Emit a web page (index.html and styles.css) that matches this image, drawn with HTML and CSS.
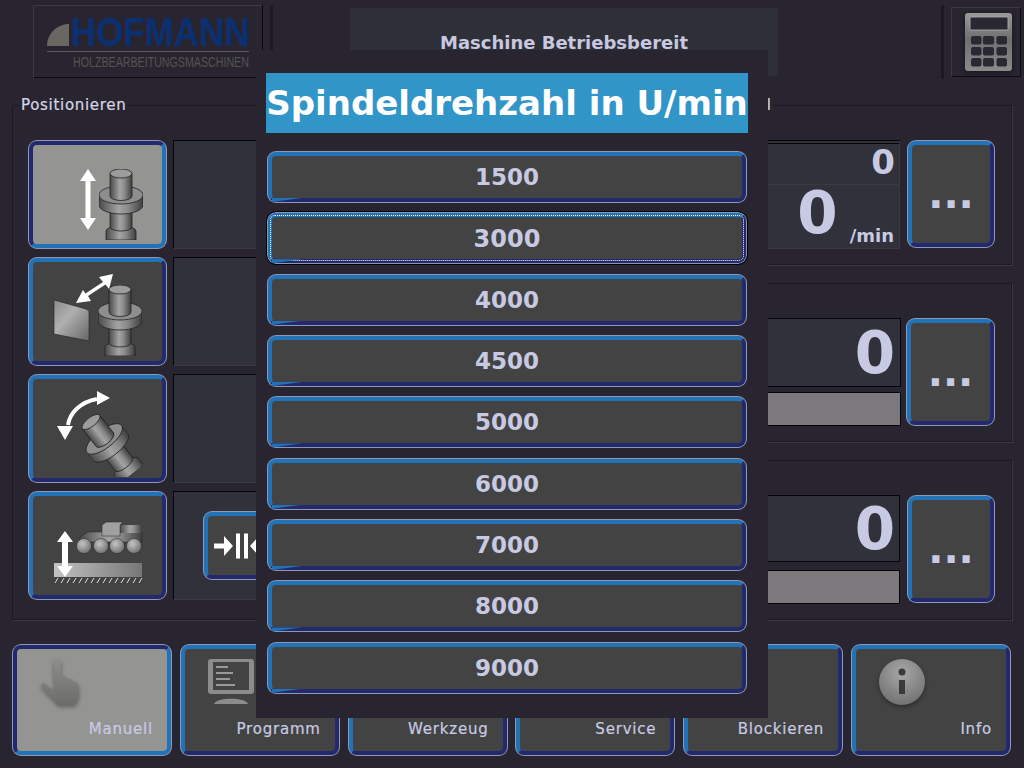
FILE: index.html
```html
<!DOCTYPE html>
<html lang="de">
<head>
<meta charset="utf-8">
<title>Hofmann</title>
<link rel="stylesheet" href="styles.css">
</head>
<body>
<svg class="defs" aria-hidden="true">
  <defs>
    <linearGradient id="metal" x1="0" x2="1" y1="0" y2="0">
      <stop offset="0" stop-color="#4a4a4a"/><stop offset=".45" stop-color="#a4a4a4"/><stop offset=".65" stop-color="#8c8c8c"/><stop offset="1" stop-color="#3e3e3e"/>
    </linearGradient>
    <linearGradient id="flat" x1="0" x2="1" y1="0" y2="1">
      <stop offset="0" stop-color="#8a8a8a"/><stop offset=".4" stop-color="#b0b0b0"/><stop offset="1" stop-color="#666"/>
    </linearGradient>
    <linearGradient id="ground" x1="0" x2="1" y1="0" y2="0">
      <stop offset="0" stop-color="#c2c2c2"/><stop offset="1" stop-color="#777"/>
    </linearGradient>
    <radialGradient id="ball" cx=".4" cy=".35" r=".7">
      <stop offset="0" stop-color="#c4c4c4"/><stop offset="1" stop-color="#6c6c6c"/>
    </radialGradient>
    <radialGradient id="info" cx=".5" cy=".3" r=".75">
      <stop offset="0" stop-color="#a8a8a8"/><stop offset="1" stop-color="#6e6e6e"/>
    </radialGradient>
    <linearGradient id="calc" x1="0" x2="0" y1="0" y2="1">
      <stop offset="0" stop-color="#9a9a9a"/><stop offset=".45" stop-color="#6f6f6f"/><stop offset="1" stop-color="#8a8a8a"/>
    </linearGradient>
    <linearGradient id="hand" x1="0" x2="0" y1="0" y2="1">
      <stop offset="0" stop-color="#8e8e8c"/><stop offset="1" stop-color="#6c6c6a"/>
    </linearGradient>
    <symbol id="spindle" viewBox="0 0 44 71" width="44" height="71" overflow="hidden">
      <path d="M7 62a15 5 0 0 1 30 0V71H7Z" fill="url(#metal)" stroke="#222" stroke-width=".8"/>
      <path d="M11 42H33V58a11 4 0 0 1-22 0Z" fill="url(#metal)" stroke="#222" stroke-width=".8"/>
      <path d="M0 26V36C0 41 10 45 22 45S44 41 44 36V26Z" fill="url(#metal)" stroke="#222" stroke-width=".8"/>
      <ellipse cx="22" cy="26" rx="22" ry="9" fill="#8e8e8e" stroke="#222" stroke-width=".8"/>
      <path d="M11 4.500V27a11 4.500 0 0 0 22 0V4.500Z" fill="url(#metal)" stroke="#222" stroke-width=".8"/>
      <ellipse cx="22" cy="4.500" rx="11" ry="4.500" fill="#9c9c9c" stroke="#222" stroke-width=".8"/>
    </symbol>
  </defs>
</svg>

<header class="header">
  <div class="logo">
    <svg class="logo-art" viewBox="0 0 228 71" role="img" aria-label="Hofmann">
      <path d="M13 40H35V18C23 18 13 28 13 40Z" fill="#6a6662"/>
      <text class="logo-name" transform="translate(37 40) scale(.875 1)">HOFMANN</text>
      <rect x="13" y="45" width="202" height="1" fill="#5c5a56"/>
      <text class="logo-sub" transform="translate(39 61) scale(.762 1)">HOLZBEARBEITUNGSMASCHINEN</text>
    </svg>
  </div>
  <div class="sep-black"></div>
  <div class="sep-dark"></div>
  <div class="status">Maschine Betriebsbereit</div>
  <div class="sep-tall"></div>
  <div class="calc">
    <svg class="calc-art" viewBox="0 0 47 58" aria-hidden="true">
      <rect width="47" height="58" rx="3" fill="url(#calc)"/>
      <rect x="5" y="4" width="38" height="13" rx="1.500" fill="#2a2833" stroke="#b4b4b4" stroke-width=".8"/>
      <g fill="#2a2833">
        <rect x="6" y="23" width="10.500" height="8.500" rx="2"/><rect x="18" y="23" width="11" height="8.500" rx="2"/><rect x="31.500" y="23" width="10.500" height="8.500" rx="2"/>
        <rect x="6" y="34" width="10.500" height="8.500" rx="2"/><rect x="18" y="34" width="11" height="8.500" rx="2"/><rect x="31.500" y="34" width="10.500" height="8.500" rx="2"/>
        <rect x="6" y="45" width="10.500" height="8.500" rx="2"/><rect x="18" y="45" width="11" height="8.500" rx="2"/><rect x="31.500" y="45" width="10.500" height="8.500" rx="2"/>
      </g>
    </svg>
  </div>
</header>

<main class="main">
  <section class="group group-left">
    <span class="legend">Positionieren</span>
    <div class="pos-grid">
      <button class="btn btn-pressed pos-btn">
        <svg class="pos-icon" viewBox="0 0 90 90" aria-hidden="true">
          <use href="#spindle" x="46" y="16"/>
          <path d="M35 16l8 12h-5.500v37H43l-8 12-8-12h5.500V28H27Z" fill="#fff"/>
        </svg>
      </button>
      <div class="display"></div>

      <button class="btn pos-btn">
        <svg class="pos-icon" viewBox="0 0 90 90" aria-hidden="true">
          <use href="#spindle" x="45" y="15"/>
          <path d="M1 30 33 39 36 41V71L1 64Z" fill="url(#flat)" stroke="#222" stroke-width=".6"/>
          <path d="M60 4 56 19 52.500 14.500 35 26 38 31 23 33 30 20 32.500 23.500 50 12 46 7Z" fill="#fff"/>
        </svg>
      </button>
      <div class="display"></div>

      <button class="btn pos-btn">
        <svg class="pos-icon" viewBox="0 0 90 90" aria-hidden="true">
          <g transform="translate(38 35) rotate(-38) translate(-22 -4.500)"><use href="#spindle" x="0" y="0"/></g>
          <path d="M15 38C17 25 28 15 44 12" fill="none" stroke="#fff" stroke-width="4"/>
          <path d="M44 4 57 11 44 18Z M4 39 20 39 12 53Z" fill="#fff"/>
        </svg>
      </button>
      <div class="display"></div>

      <button class="btn pos-btn">
        <svg class="pos-icon" viewBox="0 0 90 90" aria-hidden="true">
          <rect x="1" y="59" width="88" height="14" fill="url(#ground)"/>
          <path d="M2 79 5 74M8 79 11 74M14 79 17 74M20 79 23 74M26 79 29 74M32 79 35 74M38 79 41 74M44 79 47 74M50 79 53 74M56 79 59 74M62 79 65 74M68 79 71 74M74 79 77 74M80 79 83 74M86 79 89 74" stroke="#ddd" stroke-width="1"/>
          <path d="M27 33 35 28H89V38H27Z" fill="url(#metal)" stroke="#222" stroke-width=".5"/>
          <path d="M67 21H89V29H67Z" fill="url(#metal)"/>
          <path d="M49 21 53 18H70L67 21V32H49Z" fill="#a0a0a0" stroke="#222" stroke-width=".5"/>
          <g fill="url(#ball)" stroke="#222" stroke-width=".5">
            <circle cx="31" cy="42" r="7.500"/><circle cx="48" cy="42" r="7.500"/><circle cx="64" cy="42" r="7.500"/><circle cx="81" cy="42" r="7.500"/>
          </g>
          <path d="M12 27 20 38H15V62H20L12 73 4 62H9V38H4Z" fill="#fff"/>
        </svg>
      </button>
      <div class="display display-action">
        <button class="btn small-btn">
          <svg class="small-icon" viewBox="0 -1 70 26" aria-hidden="true">
            <path d="M0 9.500H10V2L19 12 10 22V14.500H0Z M22 -.5H26V24.500H22Z M30 -.5H34V24.500H30Z M36 12 45 2V9.500H55V14.500H45V22Z" fill="#fff"/>
          </svg>
        </button>
      </div>
    </div>
  </section>

  <div class="right-col">
    <section class="group">
      <span class="legend">Spindel</span>
      <div class="value-row">
        <div class="readout">
          <div class="readout-top">0</div>
          <div class="readout-main"><span class="big-num">0</span><span class="unit">/min</span></div>
        </div>
        <button class="btn more-btn">...</button>
      </div>
    </section>
    <section class="group">
      <div class="value-row value-row-tight">
        <div class="value-stack">
          <div class="value-box">0</div>
          <div class="value-bar"></div>
        </div>
        <button class="btn more-btn more-btn-wide">...</button>
      </div>
    </section>
    <section class="group">
      <div class="value-row">
        <div class="value-stack value-stack-wide">
          <div class="value-box">0</div>
          <div class="value-bar"></div>
        </div>
        <button class="btn more-btn">...</button>
      </div>
    </section>
  </div>
</main>

<nav class="nav">
  <button class="btn btn-pressed nav-btn">
    <svg class="nav-icon nav-icon-shadow" viewBox="0 0 48 50" aria-hidden="true">
      <path d="M15 4C15 0 22 0 22 4V19C25 17 27 18 28 21 31 20 33 21 34 24 37 23 39 26 40 29V37C40 41 38 44 36 47H19C16 42 10 38 3 29 1 26 4 24 6 26L15 33Z" fill="url(#hand)"/>
    </svg>
    <span>Manuell</span>
  </button>
  <button class="btn nav-btn">
    <svg class="nav-icon" viewBox="0 0 48 50" aria-hidden="true">
      <rect x="1" y="1" width="46" height="35" rx="3" fill="#8c8c8c"/>
      <rect x="6" y="4" width="36" height="28" fill="#434343"/>
      <path d="M9 8H21V10H9ZM9 14H26V16H9ZM9 20H23V22H9ZM9 26H28V28H9Z" fill="#9a9a9a"/>
      <path d="M7 46C9 39 39 39 41 46Z" fill="#8c8c8c"/>
    </svg>
    <span>Programm</span>
  </button>
  <button class="btn nav-btn"><span class="nav-spacer"></span><span>Werkzeug</span></button>
  <button class="btn nav-btn"><span class="nav-spacer"></span><span>Service</span></button>
  <button class="btn nav-btn"><span class="nav-spacer"></span><span>Blockieren</span></button>
  <button class="btn nav-btn">
    <svg class="nav-icon nav-icon-shadow" viewBox="0 0 48 50" aria-hidden="true">
      <circle cx="24" cy="24" r="23" fill="url(#info)"/>
      <circle cx="24" cy="14" r="3.500" fill="#3a3a3a"/>
      <rect x="21" y="22" width="6" height="14" fill="#3a3a3a"/>
    </svg>
    <span>Info</span>
  </button>
</nav>

<div class="modal">
  <h1 class="modal-title">Spindeldrehzahl in U/min</h1>
  <div class="modal-list">
    <button class="btn list-btn">1500</button>
    <button class="btn list-btn list-btn-focus">3000</button>
    <button class="btn list-btn">4000</button>
    <button class="btn list-btn">4500</button>
    <button class="btn list-btn">5000</button>
    <button class="btn list-btn">6000</button>
    <button class="btn list-btn">7000</button>
    <button class="btn list-btn">8000</button>
    <button class="btn list-btn">9000</button>
  </div>
</div>
</body>
</html>
```

FILE: styles.css
```css
* { box-sizing: border-box; }

html, body {
  margin: 0;
  padding: 0;
}

body {
  position: relative;
  width: 1024px;
  height: 768px;
  overflow: hidden;
  background: #282531;
  color: #c8cae4;
  font-family: "DejaVu Sans", sans-serif;
}

.defs {
  position: absolute;
  width: 0;
  height: 0;
}

/* header */
.header {
  display: flex;
  align-items: flex-start;
  height: 105px;
  padding-left: 33px;
}

.logo {
  width: 230px;
  height: 73px;
  margin-top: 5px;
  border: 1px solid;
  border-color: #3a3944 #15141b #0c0b10 #3a3944;
}

.logo-art {
  display: block;
  width: 228px;
  height: 71px;
}

.logo-name {
  font-family: "Liberation Sans", sans-serif;
  font-size: 40px;
  font-weight: 700;
  fill: #0b3072;
}

.logo-sub {
  font-family: "Liberation Sans", sans-serif;
  font-size: 14px;
  fill: #55534f;
}

.sep-black {
  width: 1px;
  height: 45px;
  margin: 5px 0 0 -1px;
  background: #08070b;
}

.sep-dark {
  width: 3px;
  height: 45px;
  margin: 5px 0 0 7px;
  background: #1b1a22;
}

.status {
  display: flex;
  align-items: center;
  justify-content: center;
  width: 428px;
  height: 68px;
  margin: 8px 0 0 77px;
  padding-top: 1px;
  background: #2e2f37;
  color: #c8c8e0;
  font-size: 18px;
  font-weight: 700;
}

.sep-tall {
  width: 3px;
  height: 74px;
  margin: 5px 0 0 163px;
  background: #1b1a22;
}

.calc {
  display: flex;
  justify-content: center;
  width: 70px;
  height: 70px;
  margin: 7px 0 0 7px;
  padding: 5px 0 0 5px;
  border: 1px solid;
  border-color: #3a3944 #0c0b10 #0c0b10 #3a3944;
}

.calc-art {
  width: 47px;
  height: 58px;
  filter: drop-shadow(0 1px 2px rgba(0, 0, 0, 0.5));
}

/* main area */
.main {
  display: grid;
  grid-template-columns: 682px 310px;
  column-gap: 8px;
  height: 515px;
  padding-left: 12px;
}

.right-col {
  display: flex;
  flex-direction: column;
  gap: 18px;
}

.group {
  position: relative;
  flex: 1;
  padding: 34px 16px 0 15px;
  border: 1px solid #1b1a22;
  box-shadow: 1px 1px 0 #3a3944;
}

.legend {
  position: absolute;
  top: -9px;
  left: 7px;
  padding: 0 1px;
  background: #282531;
  color: #d6d6e4;
  font-size: 15px;
  letter-spacing: 0.7px;
  line-height: 17px;
  -webkit-text-stroke: 0.2px #d6d6e4;
}

.pos-grid {
  display: grid;
  grid-template-columns: 139px 1fr;
  grid-auto-rows: 109px;
  gap: 8px 6px;
}

.display {
  background: #30313a;
  border: 1px solid;
  border-color: #050507 #3a3a44 #3a3a44 #050507;
}

.display-action {
  display: flex;
  align-items: center;
  padding-left: 29px;
}

/* buttons */
.btn {
  position: relative;
  display: flex;
  margin: 1px;
  padding: 0;
  border: 4px solid;
  border-color: #2272b8 #22296e #22296e #2272b8;
  border-radius: 8px;
  background: #434343;
  box-shadow: 0 0 0 1px #9097b5;
  color: #c8cae4;
  font-family: "DejaVu Sans", sans-serif;
}

.btn-pressed {
  border-color: #22296e #2272b8 #2272b8 #22296e;
  background: #949593;
}

.pos-btn {
  align-items: center;
  justify-content: center;
}

.pos-icon {
  width: 90px;
  height: 90px;
  margin-top: 7px;
}

.small-btn {
  flex: 0 0 auto;
  align-items: center;
  justify-content: center;
  width: 90px;
  height: 67px;
}

.small-icon {
  width: 70px;
  height: 26px;
}

.more-btn {
  flex: 0 0 auto;
  align-items: center;
  justify-content: center;
  width: 86px;
  height: 106px;
  font-size: 40px;
  font-weight: 700;
  line-height: 40px;
}

.more-btn-wide {
  width: 87px;
}

/* readouts */
.value-row {
  display: flex;
  gap: 7px;
  justify-content: flex-end;
}

.value-row-tight {
  gap: 5px;
}

.readout {
  flex: 1;
  height: 109px;
  border: 1px solid;
  border-color: #050507 #3a3a44 #3a3a44 #30313a;
  border-top: 4px double #050507;
  background: #30313a;
}

.readout-top {
  height: 41px;
  padding-right: 4px;
  border-bottom: 1px solid #3a3a44;
  font-size: 34px;
  font-weight: 700;
  line-height: 36px;
  text-align: right;
}

.readout-main {
  display: flex;
  align-items: flex-start;
  justify-content: flex-end;
  height: 60px;
  padding-right: 5px;
  font-weight: 700;
}

.big-num {
  margin: -1px 12px 0 0;
  font-size: 58px;
  line-height: 58px;
}

.unit {
  margin-top: 42px;
  font-size: 18px;
  line-height: 18px;
}

.value-stack {
  display: flex;
  flex: 1;
  flex-direction: column;
  gap: 5px;
}

.value-stack-wide {
  gap: 8px;
}

.value-box {
  height: 69px;
  padding-right: 5px;
  border: 1px solid #050507;
  background: #30313a;
  font-size: 58px;
  font-weight: 700;
  line-height: 68px;
  text-align: right;
}

.value-stack-wide .value-box {
  height: 67px;
  padding-right: 4px;
  line-height: 66px;
}

.value-bar {
  height: 34px;
  border: 1px solid #050507;
  background: #7b797b;
}

/* navigation */
.nav {
  display: flex;
  gap: 7.800px;
  margin-top: 24px;
  padding-left: 12px;
}

.nav-btn {
  flex-direction: column;
  align-items: flex-end;
  justify-content: space-between;
  width: 158px;
  height: 110px;
  padding: 9px 14px 13px 22px;
  font-size: 15px;
  letter-spacing: 0.8px;
  line-height: 18px;
  -webkit-text-stroke: 0.2px #c8cae4;
}

.nav-icon {
  align-self: flex-start;
  width: 48px;
  height: 50px;
}

.nav-icon-shadow {
  filter: drop-shadow(0 2px 2px rgba(0, 0, 0, 0.35));
}

.nav-spacer {
  height: 50px;
}

/* modal */
.modal {
  position: absolute;
  top: 50px;
  left: 256px;
  width: 512px;
  height: 668px;
  padding: 23px 20px 0 10px;
  background: #282531;
}

.modal-title {
  height: 60px;
  margin: 0 0 18px;
  background: #3195c7;
  color: #fff;
  font-size: 34px;
  font-weight: 700;
  line-height: 60px;
  text-align: center;
  white-space: nowrap;
}

.modal-list {
  display: flex;
  flex-direction: column;
  gap: 9.350px;
  padding-left: 1px;
}

.list-btn {
  align-items: center;
  justify-content: center;
  width: 478px;
  height: 50px;
  font-size: 23px;
  font-weight: 700;
}

.list-btn::after {
  content: "";
  position: absolute;
  bottom: -4px;
  left: 0;
  width: 30px;
  height: 4px;
  background: #2272b8;
  clip-path: polygon(0 0, 100% 0, 0 100%);
}

.list-btn-focus {
  padding-top: 1px;
  font-size: 24px;
  outline: 1px solid #000;
  outline-offset: 1px;
}

.list-btn-focus::before {
  content: "";
  position: absolute;
  inset: -2px;
  border: 1px dotted #fff;
  border-radius: 5px;
}
```
